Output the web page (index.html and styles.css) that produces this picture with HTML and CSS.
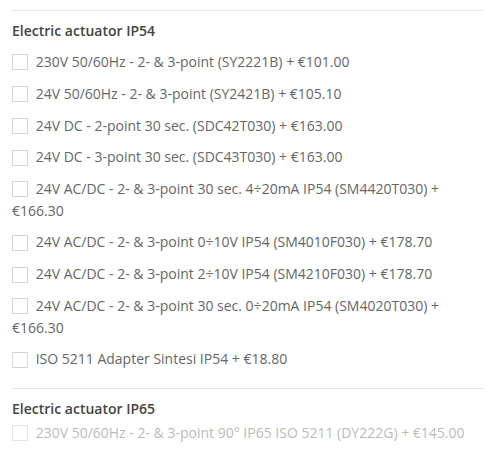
FILE: index.html
```html
<!DOCTYPE html>
<html lang="en">
<head>
    <meta charset="UTF-8">
    <meta name="viewport" content="width=device-width, initial-scale=1.0">
    <title>Options</title>
    <link rel="stylesheet" href="styles.css">
</head>
<body>
    <div class="options">
        <div class="group">
            <h3>Electric actuator IP54</h3>
            <label class="option"><input type="checkbox"> 230V 50/60Hz - 2- &amp; 3-point (SY2221B) + €101.00</label>
            <label class="option"><input type="checkbox"> 24V 50/60Hz - 2- &amp; 3-point (SY2421B) + €105.10</label>
            <label class="option"><input type="checkbox"> 24V DC - 2-point 30 sec. (SDC42T030) + €163.00</label>
            <label class="option"><input type="checkbox"> 24V DC - 3-point 30 sec. (SDC43T030) + €163.00</label>
            <label class="option"><input type="checkbox"> 24V AC/DC - 2- &amp; 3-point 30 sec. 4÷20mA IP54 (SM4420T030) + €166.30</label>
            <label class="option"><input type="checkbox"> 24V AC/DC - 2- &amp; 3-point 0÷10V IP54 (SM4010F030) + €178.70</label>
            <label class="option"><input type="checkbox"> 24V AC/DC - 2- &amp; 3-point 2÷10V IP54 (SM4210F030) + €178.70</label>
            <label class="option"><input type="checkbox"> 24V AC/DC - 2- &amp; 3-point 30 sec. 0÷20mA IP54 (SM4020T030) + €166.30</label>
            <label class="option"><input type="checkbox"> ISO 5211 Adapter Sintesi IP54 + €18.80</label>
        </div>
        <div class="group disabled">
            <h3>Electric actuator IP65</h3>
            <label class="option"><input type="checkbox" disabled> 230V 50/60Hz - 2- &amp; 3-point 90° IP65 ISO 5211 (DY222G) + €145.00</label>
        </div>
    </div>
</body>
</html>
```

FILE: styles.css
```css
body {
    font-family: "Open Sans", sans-serif;
    margin: 0;
    padding: 10px 8px 0 12px;
    background-color: #fff;
    color: #666;
}

.group {
    border-top: 1px solid #e8e8e8;
    padding-top: 10px;
    padding-bottom: 8px;
}

.group h3 {
    font-size: 14px;
    font-weight: 600;
    line-height: 20px;
    color: #444;
    margin: 0 0 10px 0;
}

.option {
    display: block;
    font-size: 14px;
    line-height: 21.5px;
    margin-bottom: 10.3px;
}

.option input {
    -webkit-appearance: none;
    appearance: none;
    width: 16px;
    height: 16px;
    margin: 0 4px 0 0;
    border: 1px solid #d4d4d4;
    border-radius: 0;
    background: #fff;
    vertical-align: middle;
    position: relative;
    top: -1px;
}

.disabled h3 {
    margin-bottom: 3px;
}

.disabled .option {
    color: #bbb;
}

.disabled .option input {
    border-color: #e6e6e6;
}
```
